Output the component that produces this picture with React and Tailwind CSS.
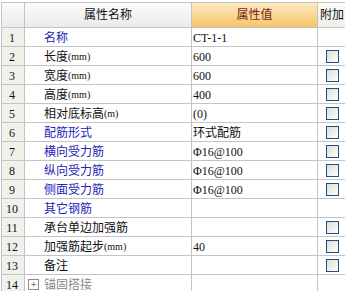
import React from 'react';

// 属性编辑表格（承台属性）
const rows = [
  { n: 1, name: '名称', blue: true, value: 'CT-1-1', check: false },
  { n: 2, name: '长度', unit: '(mm)', value: '600', check: true },
  { n: 3, name: '宽度', unit: '(mm)', value: '600', check: true },
  { n: 4, name: '高度', unit: '(mm)', value: '400', check: true },
  { n: 5, name: '相对底标高', unit: '(m)', value: '(0)', check: true },
  { n: 6, name: '配筋形式', blue: true, value: '环式配筋', check: true },
  { n: 7, name: '横向受力筋', blue: true, value: 'Φ16@100', check: true },
  { n: 8, name: '纵向受力筋', blue: true, value: 'Φ16@100', check: true },
  { n: 9, name: '侧面受力筋', blue: true, value: 'Φ16@100', check: true },
  { n: 10, name: '其它钢筋', blue: true, value: '', check: false },
  { n: 11, name: '承台单边加强筋', value: '', check: true },
  { n: 12, name: '加强筋起步', unit: '(mm)', value: '40', check: true },
  { n: 13, name: '备注', value: '', check: true },
  { n: 14, name: '锚固搭接', group: true, value: '', check: false },
];

const font = { fontFamily: '"Liberation Serif", "Noto Sans CJK SC", serif' };

const Checkbox = () => (
  <div className="w-[13px] h-[13px] border border-[#1c5180] bg-gradient-to-br from-[#dcdcd7] to-[#ffffff]" />
);

export default function App() {
  return (
    <div className="w-[345px] h-[291px] overflow-hidden bg-white pl-px text-[12px] text-[#111]" style={font}>
      {/* En-tête */}
      <div className="mt-[2px] flex h-[26px] border-t border-b border-[#c4c4c4]">
        <div className="w-[24px] shrink-0 border-l border-r border-[#c4c4c4] bg-gradient-to-b from-[#fbfbfb] to-[#ebebeb]" />
        <div className="w-[167px] shrink-0 border-r border-[#c4c4c4] bg-gradient-to-b from-[#fbfbfb] to-[#ebebeb] flex items-center justify-center">
          属性名称
        </div>
        <div className="w-[126px] shrink-0 border-r border-[#c4c4c4] bg-gradient-to-b from-[#fdebc0] to-[#f5c468] flex items-center justify-center text-[#7a1a1a]">
          属性值
        </div>
        <div className="flex-1 bg-gradient-to-b from-[#fbfbf8] to-[#eeeeea] flex items-center pl-[2px] whitespace-nowrap">
          附加
        </div>
      </div>

      {rows.map((r) => (
        <div key={r.n} className="flex h-[19px] border-b border-[#c4c4c4]">
          <div className="w-[24px] shrink-0 border-l border-r border-[#c4c4c4] bg-[#f1f1eb] flex items-center justify-center pt-px pr-[2px]">
            {r.n}
          </div>
          <div className="w-[167px] shrink-0 border-r border-[#c4c4c4] flex items-center pt-px relative pl-[19px] whitespace-nowrap">
            {r.group && (
              <div className="absolute left-[3px] top-[4px] w-[11px] h-[11px] border border-[#8c8c8c] bg-white flex items-center justify-center text-[11px] leading-none text-[#333]">
                +
              </div>
            )}
            <span className={r.blue ? 'text-[#2424b8]' : r.group ? 'text-[#8a8a8a]' : 'text-[#111]'}>
              {r.name}
            </span>
            {r.unit && <span className="text-[10px]">{r.unit}</span>}
          </div>
          <div className="w-[126px] shrink-0 border-r border-[#c4c4c4] flex items-center pt-px pl-[1px] whitespace-nowrap">
            {r.value}
          </div>
          <div className="flex-1 flex items-center pl-[8px]">
            {r.check && <Checkbox />}
          </div>
        </div>
      ))}
    </div>
  );
}
